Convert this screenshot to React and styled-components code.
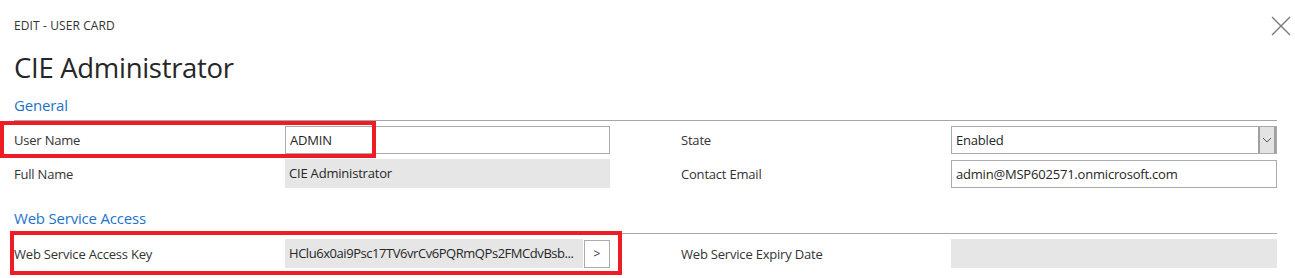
import React from 'react';
import styled, { createGlobalStyle } from 'styled-components';

const GlobalStyle = createGlobalStyle`
	body {
		margin: 0;
		background: #fff;
		font-family: "Open Sans", "Noto Sans", sans-serif;
		color: #262626;
	}
`

const App = () => {
	return <Page>
		<GlobalStyle />
		<Header>
			<Caption>EDIT - USER CARD</Caption>
			<CloseButton aria-label="close">
				<svg width="20" height="20" viewBox="0 0 20 20">
					<path d="M1 1 L19 19 M19 1 L1 19" stroke="#7a7a7a" strokeWidth="1.4" />
				</svg>
			</CloseButton>
		</Header>
		<Title>CIE Administrator</Title>

		<Section>
			<SectionTitle>General</SectionTitle>
			<Fields>
				<Label>User Name</Label>
				<Input defaultValue="ADMIN" />
				<Label right>State</Label>
				<Select>
					<span>Enabled</span>
					<Chevron>
						<svg width="10" height="6" viewBox="0 0 10 6">
							<path d="M1 1 L5 5 L9 1" stroke="#555" strokeWidth="1" fill="none" />
						</svg>
					</Chevron>
				</Select>

				<Label>Full Name</Label>
				<ReadOnly>CIE Administrator</ReadOnly>
				<Label right>Contact Email</Label>
				<Input defaultValue="admin@MSP602571.onmicrosoft.com" />
			</Fields>
		</Section>

		<Section>
			<SectionTitle>Web Service Access</SectionTitle>
			<Fields>
				<Label>Web Service Access Key</Label>
				<KeyField>
					<ReadOnly tight>HClu6x0ai9Psc17TV6vrCv6PQRmQPs2FMCdvBsb...</ReadOnly>
					<AssistButton>&gt;</AssistButton>
				</KeyField>
				<Label right>Web Service Expiry Date</Label>
				<ReadOnly />
			</Fields>
		</Section>
		<Highlight style={{ left: 0, top: 121, width: 376, height: 37 }} />
		<Highlight style={{ left: 10, top: 231, width: 612, height: 44 }} />
	</Page>
}

const Page = styled.div`
	position: relative;
	width: 1295px;
	height: 278px;
	padding: 0 18px 0 14px;
	box-sizing: border-box;
	overflow: hidden;
`
const Header = styled.div`
	display: flex;
	justify-content: space-between;
	align-items: center;
	height: 50px;
`
const Caption = styled.div`
	font-size: 12px;
	letter-spacing: 0.1px;
	color: #333;
`
const CloseButton = styled.button`
	border: none;
	background: none;
	padding: 0;
	margin-right: -14px;
	margin-top: 2px;
	display: flex;
`
const Title = styled.h1`
	margin: 0;
	font-weight: 400;
	font-size: 27.5px;
	line-height: 36px;
	color: #262626;
	letter-spacing: -0.3px;
`
const Section = styled.section`
	margin-top: 4px;
`
const SectionTitle = styled.h2`
	margin: 0;
	font-weight: 400;
	font-size: 15px;
	line-height: 30px;
	color: #1e73c9;
	border-bottom: 1px solid #a6a6a6;
	letter-spacing: -0.2px;
`
const Fields = styled.div`
	display: grid;
	grid-template-columns: 271px 325px 341px 326px;
	row-gap: 5px;
	padding-top: 5px;
	padding-bottom: 11px;
	align-items: center;
`
const Label = styled.div`
	font-size: 13px;
	color: #333;
	padding-left: ${props => props.right ? '71px' : '0'};
	letter-spacing: -0.2px;
`
const fieldBase = `
	box-sizing: border-box;
	height: 28px;
	font-family: "Open Sans", "Noto Sans", sans-serif;
	font-size: 13px;
	color: #262626;
	padding: 0 4px;
	letter-spacing: -0.2px;
`
const Input = styled.input`
	${fieldBase}
	width: 100%;
	border: 1px solid #ababab;
	background: #fff;
	outline: none;
`
const Select = styled.div`
	${fieldBase}
	display: flex;
	align-items: center;
	justify-content: space-between;
	border: 1px solid #ababab;
	padding-right: 0;
`
const Chevron = styled.span`
	display: flex;
	align-items: center;
	justify-content: center;
	width: 18px;
	height: 100%;
	background: #e3e3e3;
	border-left: 2px solid #a0a0a0;
	border-right: 2px solid #a0a0a0;
	box-sizing: border-box;
`
const ReadOnly = styled.div`
	${fieldBase}
	height: 29px;
	line-height: 29px;
	background: #e6e6e6;
	white-space: nowrap;
	overflow: hidden;
	min-width: 0;
	flex: 1;
	letter-spacing: ${props => props.tight ? '-0.45px' : '-0.2px'};
`
const KeyField = styled.div`
	display: flex;
	gap: 1px;
	align-items: center;
`
const AssistButton = styled.button`
	flex: none;
	width: 26px;
	height: 28px;
	border: 1px solid #ababab;
	background: #fff;
	font-size: 12px;
	color: #333;
	padding: 0;
	font-family: "Open Sans", sans-serif;
`
const Highlight = styled.div`
	position: absolute;
	box-sizing: border-box;
	border: 4px solid #ee1c25;
	pointer-events: none;
`

export default App;
